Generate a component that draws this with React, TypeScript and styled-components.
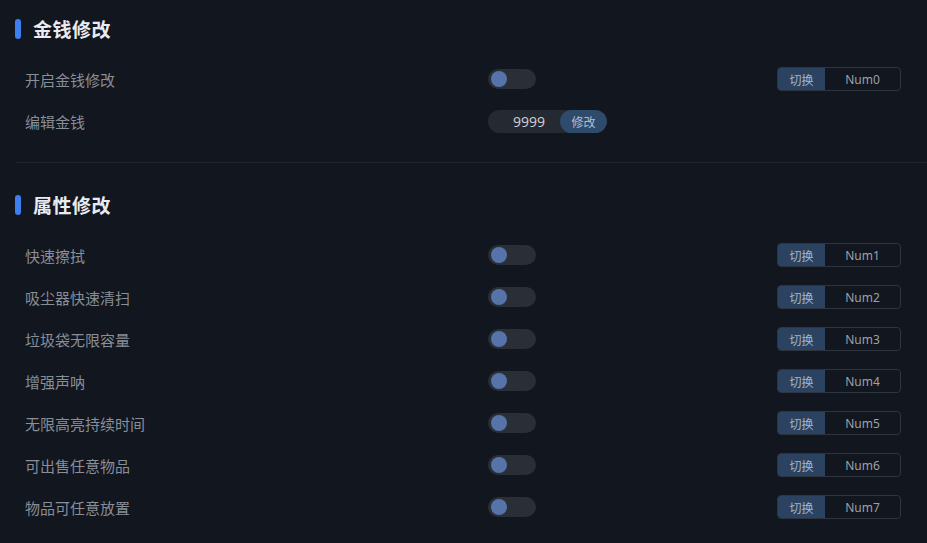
import React from "react";
import styled, { createGlobalStyle } from "styled-components";

const GlobalStyle = createGlobalStyle`
  html, body {
    margin: 0;
    padding: 0;
    background: #12161f;
  }
  body {
    font-family: "Noto Sans CJK SC", "Noto Sans", sans-serif;
  }
`;

const Page = styled.div`
  width: 927px;
  height: 543px;
  overflow: hidden;
  background: #12161f;
  box-sizing: border-box;
`;

const Section = styled.section<{ $top: number; $bottom: number }>`
  padding-top: ${(p) => p.$top}px;
  padding-bottom: ${(p) => p.$bottom}px;
`;

const Header = styled.div`
  display: flex;
  align-items: center;
  gap: 12px;
  height: 36px;
  padding-left: 15px;
  margin-bottom: 12px;
`;

const Bar = styled.span`
  width: 6px;
  height: 20px;
  margin-top: 2px;
  border-radius: 3px;
  background: #3d7ef0;
`;

const Title = styled.h2`
  margin: 0;
  font-size: 19px;
  font-weight: 700;
  color: #e8ebf0;
  letter-spacing: 0.5px;
`;

const Divider = styled.div`
  height: 1px;
  margin-left: 16px;
  background: #1f242e;
`;

const Row = styled.div`
  display: grid;
  grid-template-columns: 463px 1fr auto;
  align-items: center;
  height: 42px;
  padding: 0 26px 0 25px;
`;

const Label = styled.span`
  font-size: 15px;
  color: #898e97;
`;

const Toggle = styled.div`
  position: relative;
  width: 48px;
  height: 20px;
  border-radius: 10px;
  background: #2a2e37;
`;

const Knob = styled.span`
  position: absolute;
  top: 2px;
  left: 3px;
  width: 16px;
  height: 16px;
  border-radius: 50%;
  background: #5674aa;
`;

const MoneyBox = styled.div`
  display: flex;
  align-items: center;
  width: 119px;
  height: 23px;
  border-radius: 12px;
  background: #252932;
  overflow: hidden;
`;

const MoneyValue = styled.span`
  flex: 1;
  text-align: center;
  font-family: "Noto Sans", sans-serif;
  font-size: 14px;
  color: #c8cbd1;
  padding-left: 10px;
`;

const MoneyButton = styled.button`
  height: 100%;
  width: 47px;
  border: none;
  border-radius: 12px;
  background: #2e4b6c;
  color: #aebfd4;
  font-family: inherit;
  font-size: 12px;
  padding: 0;
`;

const Hotkey = styled.div`
  display: flex;
  width: 124px;
  height: 24px;
  box-sizing: border-box;
  border: 1px solid #2e3541;
  border-radius: 4px;
  overflow: hidden;
`;

const HotkeyAction = styled.span`
  display: flex;
  align-items: center;
  justify-content: center;
  width: 47px;
  background: #2b4360;
  color: #a6b5c7;
  font-size: 12px;
`;

const HotkeyKey = styled.span`
  flex: 1;
  display: flex;
  align-items: center;
  justify-content: center;
  color: #9ba1aa;
  font-family: "Noto Sans", sans-serif;
  font-size: 12px;
`;

const attrs = [
  "快速擦拭",
  "吸尘器快速清扫",
  "垃圾袋无限容量",
  "增强声呐",
  "无限高亮持续时间",
  "可出售任意物品",
  "物品可任意放置",
];

const Switch = () => (
  <Toggle>
    <Knob />
  </Toggle>
);

const Key = ({ k }: { k: string }) => (
  <Hotkey>
    <HotkeyAction>切换</HotkeyAction>
    <HotkeyKey>{k}</HotkeyKey>
  </Hotkey>
);

export default function App() {
  return (
    <Page>
      <GlobalStyle />
      <Section $top={10} $bottom={20}>
        <Header>
          <Bar />
          <Title>金钱修改</Title>
        </Header>
        <Row>
          <Label>开启金钱修改</Label>
          <Switch />
          <Key k="Num0" />
        </Row>
        <Row>
          <Label>编辑金钱</Label>
          <MoneyBox>
            <MoneyValue>9999</MoneyValue>
            <MoneyButton>修改</MoneyButton>
          </MoneyBox>
          <span />
        </Row>
      </Section>
      <Divider />
      <Section $top={23} $bottom={0}>
        <Header>
          <Bar />
          <Title>属性修改</Title>
        </Header>
        {attrs.map((name, i) => (
          <Row key={name}>
            <Label>{name}</Label>
            <Switch />
            <Key k={`Num${i + 1}`} />
          </Row>
        ))}
      </Section>
    </Page>
  );
}
